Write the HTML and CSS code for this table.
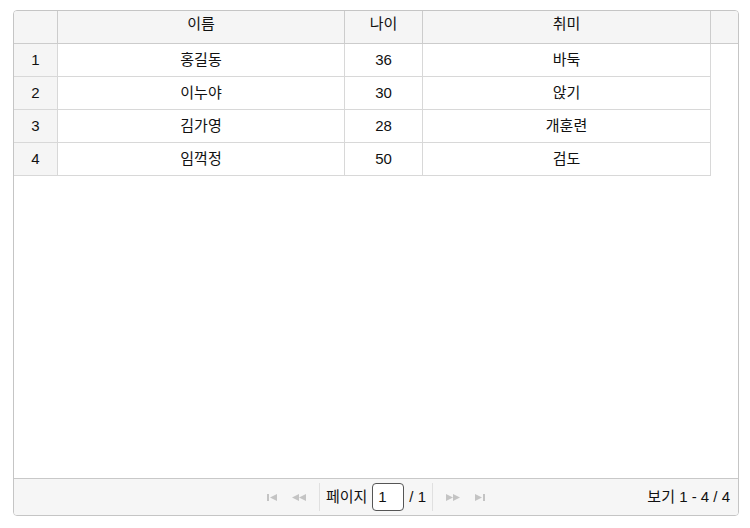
FILE: index.html
```html
<!DOCTYPE html>
<html lang="ko">
<head>
<meta charset="utf-8">
<link rel="stylesheet" href="styles.css">
</head>
<body>
<div class="grid">
  <div class="hdr">
    <div class="hc rn"></div>
    <div class="hc c-name">이름</div>
    <div class="hc c-age">나이</div>
    <div class="hc c-hobby">취미</div>
    <div class="hc c-extra"></div>
  </div>
  <div class="bdiv">
    <div class="rows">
      <div class="row"><div class="cell rn">1</div><div class="cell c-name">홍길동</div><div class="cell c-age">36</div><div class="cell c-hobby">바둑</div></div>
      <div class="row"><div class="cell rn">2</div><div class="cell c-name">이누야</div><div class="cell c-age">30</div><div class="cell c-hobby">앉기</div></div>
      <div class="row"><div class="cell rn">3</div><div class="cell c-name">김가영</div><div class="cell c-age">28</div><div class="cell c-hobby">개훈련</div></div>
      <div class="row"><div class="cell rn">4</div><div class="cell c-name">임꺽정</div><div class="cell c-age">50</div><div class="cell c-hobby">검도</div></div>
    </div>
  </div>
  <div class="pager">
    <div class="pg-center">
      <span class="ico"><svg width="13" height="9" viewBox="0 0 13 9"><rect x="1" y="1" width="2" height="7" fill="#c4c4c4"/><path d="M11 1 L4 4.5 L11 8 Z" fill="#c4c4c4"/></svg></span>
      <span class="ico"><svg width="17" height="9" viewBox="0 0 17 9"><path d="M8 1 L1 4.5 L8 8 Z" fill="#c4c4c4"/><path d="M15 1 L8 4.5 L15 8 Z" fill="#c4c4c4"/></svg></span>
      <span class="sep"></span>
      <span class="lbl">페이지</span>
      <span class="inp">1</span>
      <span class="lbl">/ 1</span>
      <span class="sep"></span>
      <span class="ico"><svg width="17" height="9" viewBox="0 0 17 9"><path d="M2 1 L9 4.5 L2 8 Z" fill="#c4c4c4"/><path d="M9 1 L16 4.5 L9 8 Z" fill="#c4c4c4"/></svg></span>
      <span class="ico"><svg width="13" height="9" viewBox="0 0 13 9"><path d="M2 1 L9 4.5 L2 8 Z" fill="#c4c4c4"/><rect x="10" y="1" width="2" height="7" fill="#c4c4c4"/></svg></span>
    </div>
    <div class="pg-right">보기 1 - 4 / 4</div>
  </div>
</div>
</body>
</html>
```
FILE: styles.css
```css
html, body {
  margin: 0;
  padding: 0;
  background: #ffffff;
}
body {
  padding: 10px 0 0 13px;
  font-family: "Liberation Sans", "Noto Sans CJK KR", sans-serif;
  font-size: 15px;
  color: #111111;
}
.grid {
  box-sizing: border-box;
  width: 726px;
  height: 506px;
  border: 1px solid #c5c5c5;
  border-radius: 4px;
  display: flex;
  flex-direction: column;
  overflow: hidden;
}
.hdr {
  display: flex;
  background: #f5f5f5;
  border-bottom: 1px solid #cccccc;
  flex: none;
}
.hc {
  box-sizing: border-box;
  height: 32px;
  padding-top: 4px;
  line-height: 18px;
  text-align: center;
  border-right: 1px solid #cccccc;
}
.rn { width: 44px; }
.c-name { width: 287px; }
.c-age { width: 78px; }
.c-hobby { width: 288px; }
.c-extra { width: 27px; border-right: none; }
.bdiv {
  flex: 1;
  background: #ffffff;
}
.rows {
  width: 697px;
}
.row {
  display: flex;
}
.cell {
  box-sizing: border-box;
  height: 33px;
  line-height: 32px;
  text-align: center;
  border-right: 1px solid #d8d8d8;
  border-bottom: 1px solid #d8d8d8;
}
.cell.rn {
  background: #f5f5f5;
}
.pager {
  flex: none;
  height: 36px;
  border-top: 1px solid #c8c8c8;
  background: #f6f6f6;
  position: relative;
  display: flex;
  align-items: center;
  justify-content: center;
}
.pg-center {
  display: flex;
  align-items: center;
}
.ico {
  display: flex;
  align-items: center;
  justify-content: center;
  width: 27px;
  height: 20px;
}
.sep {
  width: 1px;
  height: 28px;
  background: #e0e0e0;
  margin: 0 6px;
}
.lbl {
  line-height: 20px;
}
.inp {
  box-sizing: border-box;
  width: 32px;
  height: 28px;
  border: 1px solid #555555;
  border-radius: 4px;
  background: #ffffff;
  line-height: 26px;
  padding-left: 5px;
  margin: 0 5px;
}
.pg-right {
  position: absolute;
  right: 8px;
  top: 0;
  line-height: 36px;
}
```
